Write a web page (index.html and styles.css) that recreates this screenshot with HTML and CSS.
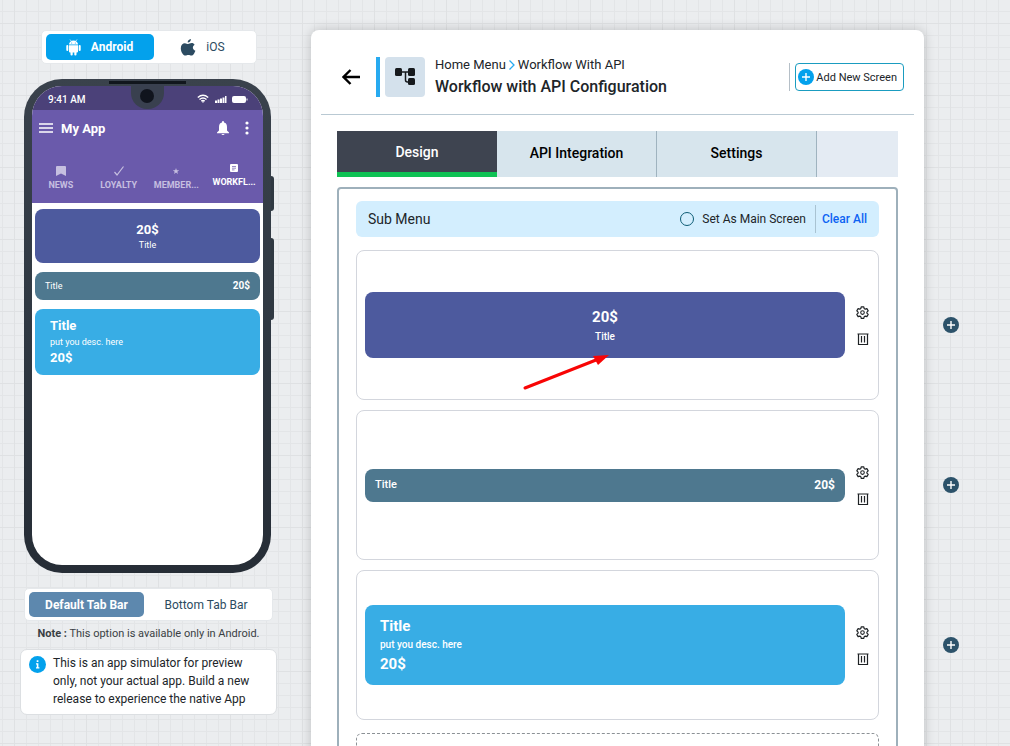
FILE: index.html
```html
<!DOCTYPE html>
<html lang="en">
<head>
    <meta charset="UTF-8">
    <meta name="viewport" content="width=device-width, initial-scale=1.0">
    <title>Workflow with API Configuration</title>
    <link rel="stylesheet" href="styles.css">
</head>
<body>

    <!-- shared icons -->
    <svg class="sprite" aria-hidden="true">
        <symbol id="icon-gear" viewBox="0 0 24 24">
            <path fill="none" stroke="currentColor" stroke-width="2.2" stroke-linejoin="round" d="M9.600 1.500h4.800l.7 3.200 1.900 1.100 3.100-1 2.400 4.200-2.400 2.200v2l2.400 2.200-2.400 4.200-3.100-1-1.900 1.100-.7 3.100H9.600l-.7-3.100L7 18.600l-3.100 1-2.400-4.200 2.400-2.200v-2L1.500 9l2.400-4.200 3.100 1 1.900-1.100z"/>
            <circle cx="12" cy="12.200" r="3.300" fill="none" stroke="currentColor" stroke-width="2"/>
        </symbol>
        <symbol id="icon-trash" viewBox="0 0 12 12">
            <path fill="none" stroke="currentColor" stroke-width="1.200" d="M0.500 1h11M1.500 1.500v10h9v-10M4.500 3v6.500M7.500 3v6.500"/>
        </symbol>
        <symbol id="icon-plus" viewBox="0 0 16 16">
            <circle cx="8" cy="8" r="8" fill="currentColor"/>
            <path stroke="#fff" stroke-width="1.400" d="M8 4v8M4 8h8"/>
        </symbol>
    </svg>

    <aside class="preview">
        <div class="switch platform-switch">
            <button type="button" class="switch-btn active">
                <svg width="15" height="17" viewBox="0 0 15 17" fill="currentColor"><path d="M3 5.500a4.500 4 0 0 1 9 0zM3 6.200h9v6.300a1 1 0 0 1-1 1H4a1 1 0 0 1-1-1z"/><rect x="0.300" y="6" width="2" height="6" rx="1"/><rect x="12.700" y="6" width="2" height="6" rx="1"/><rect x="4.500" y="12" width="2.200" height="4.500" rx="1"/><rect x="8.300" y="12" width="2.200" height="4.500" rx="1"/><path d="M4 0.500l1.500 2M11 0.500l-1.500 2" stroke="currentColor" stroke-width="0.700"/><circle cx="5.700" cy="4" r="0.500" fill="#03a1ec"/><circle cx="9.300" cy="4" r="0.500" fill="#03a1ec"/></svg>
                Android
            </button>
            <button type="button" class="switch-btn">
                <svg width="16" height="17" viewBox="0 0 16 17" fill="currentColor"><path d="M10.900 0c.2 1.900-1.300 3.600-3.200 3.600C7.500 1.800 9 .2 10.900 0zM14.600 5.700c-2.600 1.600-2.100 4.900.8 6-.7 2-2.200 4.900-4 4.900-1.200 0-1.600-.7-3-.7s-1.900.7-3 .7C3.200 16.600.800 12.700.800 9.200c0-3.200 2-5 4.100-5 1.300 0 2.400.8 3.200.8.800 0 2-.9 3.700-.9 1.100 0 2.200.6 2.800 1.600z"/></svg>
                iOS
            </button>
        </div>

        <div class="phone">
            <span class="phone-key key-power"></span>
            <span class="phone-key key-volume"></span>
            <span class="speaker"></span>
            <span class="notch"><span class="camera"></span></span>
            <div class="screen">
                <div class="status-bar">
                    <span>9:41 AM</span>
                    <svg width="52" height="10" viewBox="0 0 52 10" fill="none" stroke="#fff"><path stroke-width="1.500" d="M0.800 3.500q5.200-4.400 10.400 0M2.500 5.500q3.500-2.800 7 0M4.300 7.200q1.700-1.300 3.400 0"/><path fill="#fff" stroke="none" d="M4.800 7.500h2.400L6 9zM18 6.500h2V9h-2zM20.500 5.500h2V9h-2zM23 4.500h2V9h-2zM25.500 3.500h2V9h-2zM28 2h1.500v7H28z"/><rect x="35" y="2" width="14" height="7" rx="2" fill="#fff" stroke="none"/><path d="M50 4.500v2"/></svg>
                </div>
                <div class="app-header">
                    <div class="app-title">
                        <svg width="14" height="10" viewBox="0 0 14 10"><path stroke="#fff" stroke-width="1.500" d="M0 1h14M0 5h14M0 9h14"/></svg>
                        <strong>My App</strong>
                        <svg width="12" height="14" viewBox="0 0 12 14" fill="#fff"><path d="M6 0a1 1 0 0 1 1 1v.500c2.200.5 3 2.300 3 4.500v3.500l2 2v.8H0v-.8l2-2V6c0-2.200.8-4 3-4.500V1a1 1 0 0 1 1-1zM4.500 13h3a1.500 1 0 0 1-3 0z"/></svg>
                        <svg width="4" height="14" viewBox="0 0 4 14" fill="#fff"><circle cx="2" cy="2" r="1.600"/><circle cx="2" cy="7" r="1.600"/><circle cx="2" cy="12" r="1.600"/></svg>
                    </div>
                    <nav class="app-tabs">
                        <a href="#" class="app-tab">
                            <svg width="10" height="10" viewBox="0 0 10 10" fill="currentColor"><path d="M0 1q0-1 1-1h8q1 0 1 1v9L5 7.500 0 10z"/></svg>
                            NEWS
                        </a>
                        <a href="#" class="app-tab">
                            <svg width="10" height="10" viewBox="0 0 10 10" fill="none" stroke="currentColor"><path stroke-width="1.200" d="M0.500 6L3 9l6.500-8.500"/></svg>
                            LOYALTY
                        </a>
                        <a href="#" class="app-tab">
                            <svg width="10" height="10" viewBox="0 0 10 10" fill="currentColor"><path d="M5 2l.8 2.200h2.400L6.300 5.700 7 8 5 6.600 3 8l.7-2.300L1.800 4.200h2.400z"/></svg>
                            MEMBER...
                        </a>
                        <a href="#" class="app-tab active">
                            <svg width="10" height="10" viewBox="0 0 10 10"><rect x="1" y="1" width="8" height="8" rx="1" fill="currentColor"/><path stroke="#6a5aab" stroke-width="0.700" d="M3 3.500h4M3 5.200h4M3 6.900h2.500"/></svg>
                            WORKFL...
                        </a>
                    </nav>
                </div>
                <div class="app-body">
                    <div class="tile tile-center"><strong>20$</strong><span>Title</span></div>
                    <div class="tile tile-row"><span>Title</span><strong>20$</strong></div>
                    <div class="tile tile-desc"><strong>Title</strong><span>put you desc. here</span><strong>20$</strong></div>
                </div>
            </div>
        </div>

        <div class="switch tabbar-switch">
            <button type="button" class="switch-btn active">Default Tab Bar</button>
            <button type="button" class="switch-btn">Bottom Tab Bar</button>
        </div>
        <p class="note"><strong>Note :</strong> This option is available only in Android.</p>
        <div class="info">
            <svg width="17" height="17" viewBox="0 0 17 17"><circle cx="8.500" cy="8.500" r="8.500" fill="#03a1ec"/><path fill="#fff" d="M7.700 4.300h1.700V6H7.700zM7 7.300h2.400v4h1v1.200H7v-1.200h.8V8.500H7z"/></svg>
            <p>This is an app simulator for preview only, not your actual app. Build a new release to experience the native App</p>
        </div>
    </aside>

    <main class="panel">
        <header class="panel-header">
            <button type="button" class="back" aria-label="Back">
                <svg width="18" height="16" viewBox="0 0 18 16" fill="none" stroke="#000" stroke-width="2.400"><path d="M18 8H1.500M8.500 1l-7 7 7 7"/></svg>
            </button>
            <span class="accent"></span>
            <div class="page-icon">
                <svg width="20" height="18" viewBox="0 0 20 18"><path fill="none" stroke="#16191d" stroke-width="1.500" d="M5 4h10M10.500 4v8q0 2 2 2H15"/><g fill="#16191d"><rect width="7" height="8" rx="1.500"/><rect x="13" width="7" height="8" rx="1.500"/><rect x="13" y="10" width="7" height="7" rx="1.500"/></g></svg>
            </div>
            <div class="page-title">
                <div class="breadcrumb">
                    <a href="#">Home Menu</a>
                    <svg width="6" height="10" viewBox="0 0 6 10" fill="none" stroke="#27aaf0" stroke-width="1.300"><path d="M0.500 0.500L5 5 0.500 9.500"/></svg>
                    <a href="#">Workflow With API</a>
                </div>
                <h1>Workflow with API Configuration</h1>
            </div>
            <div class="header-action">
                <button type="button" class="add-screen">
                    <svg width="16" height="16"><use href="#icon-plus"/></svg>
                    Add New Screen
                </button>
            </div>
        </header>

        <nav class="tabs">
            <button type="button" class="tab active">Design</button>
            <button type="button" class="tab">API Integration</button>
            <button type="button" class="tab">Settings</button>
        </nav>

        <section class="designer">
            <div class="submenu">
                <h2>Sub Menu</h2>
                <label class="main-screen"><input type="radio" name="mainScreen"> Set As Main Screen</label>
                <a href="#" class="clear">Clear All</a>
            </div>

            <div class="card">
                <div class="tile tile-center"><strong>20$</strong><span>Title</span></div>
                <div class="card-tools">
                    <button type="button" aria-label="Settings"><svg width="13" height="13"><use href="#icon-gear"/></svg></button>
                    <button type="button" aria-label="Delete"><svg width="12" height="12"><use href="#icon-trash"/></svg></button>
                </div>
                <svg class="pointer" width="88" height="38" viewBox="0 0 88 38"><path d="M3 34L74 6" stroke="#f80505" stroke-width="3" stroke-linecap="round"/><path fill="#f80505" d="M87 1L71 2l5 9z"/></svg>
            </div>
            <div class="card">
                <div class="tile tile-row"><span>Title</span><strong>20$</strong></div>
                <div class="card-tools">
                    <button type="button" aria-label="Settings"><svg width="13" height="13"><use href="#icon-gear"/></svg></button>
                    <button type="button" aria-label="Delete"><svg width="12" height="12"><use href="#icon-trash"/></svg></button>
                </div>
            </div>
            <div class="card">
                <div class="tile tile-desc"><strong>Title</strong><span>put you desc. here</span><strong>20$</strong></div>
                <div class="card-tools">
                    <button type="button" aria-label="Settings"><svg width="13" height="13"><use href="#icon-gear"/></svg></button>
                    <button type="button" aria-label="Delete"><svg width="12" height="12"><use href="#icon-trash"/></svg></button>
                </div>
            </div>
            <div class="drop-zone"></div>
        </section>
    </main>

    <div class="row-adders">
        <button type="button" aria-label="Add row"><svg width="16" height="16"><use href="#icon-plus"/></svg></button>
        <button type="button" aria-label="Add row"><svg width="16" height="16"><use href="#icon-plus"/></svg></button>
        <button type="button" aria-label="Add row"><svg width="16" height="16"><use href="#icon-plus"/></svg></button>
    </div>

</body>
</html>
```
FILE: styles.css
```css
* {
    box-sizing: border-box;
}

body {
    margin: 0;
    height: 100vh;
    overflow: hidden;
    display: flex;
    align-items: flex-start;
    font-family: Roboto, "Liberation Sans", sans-serif;
    color: #212529;
    background-color: #ebedef;
    background-image:
        linear-gradient(#dfe1e3 1px, transparent 1px),
        linear-gradient(90deg, #dfe1e3 1px, transparent 1px),
        linear-gradient(#e3e5e7 1px, transparent 1px),
        linear-gradient(90deg, #e3e5e7 1px, transparent 1px);
    background-size: 72px 72px, 72px 72px, 12px 12px, 12px 12px;
    background-position: 2px 23px, 14px 0, 2px 11px, 2px 11px;
}

button {
    font: inherit;
    color: inherit;
    border: 0;
    padding: 0;
    background: none;
    cursor: pointer;
}

a {
    color: inherit;
    text-decoration: none;
}

svg {
    display: block;
    flex: none;
}

h1, h2, p {
    margin: 0;
    font-weight: 400;
}

.sprite {
    position: absolute;
    width: 0;
    height: 0;
}

/* left column */
.preview {
    flex: none;
    width: 297px;
    padding-top: 30px;
    display: flex;
    flex-direction: column;
    align-items: center;
}

.switch {
    display: flex;
    padding: 3px 4px;
    background: #fff;
    border: 1px solid #e5e8eb;
    border-radius: 5px;
    color: #2c4b61;
    font-size: 12px;
}

.switch-btn {
    flex: 1;
    height: 26px;
    display: flex;
    align-items: center;
    justify-content: center;
    gap: 10px;
    border-radius: 5px;
}

.switch-btn.active {
    flex: none;
    color: #fff;
    font-weight: 700;
}

.platform-switch {
    width: 216px;
}

.platform-switch .active {
    width: 108px;
    background: #03a1ec;
}

.tabbar-switch {
    width: 249px;
    margin-top: 15px;
}

.tabbar-switch .active {
    width: 115px;
    background: #5d88ae;
}

.tabbar-switch .switch-btn {
    height: 25px;
}

.phone {
    position: relative;
    width: 247px;
    margin-top: 15px;
    margin-right: 2px;
    padding: 7px 8px 8px;
    border-radius: 38px;
    background: linear-gradient(#3a424c, #2f3842 50%, #262d36);
}

.phone-key {
    position: absolute;
    right: -3px;
    width: 3px;
    border-radius: 0 3px 3px 0;
    background: #303942;
}

.key-power {
    top: 97px;
    height: 35px;
}

.key-volume {
    top: 159px;
    height: 82px;
}

.speaker {
    position: absolute;
    top: 2px;
    left: 85px;
    width: 77px;
    height: 3px;
    background: #11161d;
}

.notch {
    position: absolute;
    top: 5px;
    left: 107px;
    width: 33px;
    height: 25px;
    padding: 5px 9px;
    border-radius: 0 0 16px 16px;
    background: #39404f;
}

.camera {
    display: block;
    width: 14px;
    height: 14px;
    border-radius: 50%;
    background: #10141d;
}

.screen {
    height: 479px;
    border-radius: 30px;
    overflow: hidden;
    background: #fff;
}

.status-bar {
    display: flex;
    align-items: center;
    justify-content: space-between;
    height: 24px;
    padding: 2px 14px 0 16px;
    background: #4b4179;
    color: #fff;
    font-size: 10px;
    font-weight: 500;
}

.app-header {
    height: 93px;
    background: #6a5aab;
    color: #fff;
}

.app-title {
    display: flex;
    align-items: center;
    gap: 16px;
    height: 36px;
    padding: 0 14px 0 7px;
    font-size: 13px;
}

.app-title strong {
    flex: 1;
    margin-left: -8px;
}

.app-tabs {
    display: grid;
    grid-template-columns: repeat(4, 1fr);
    padding-top: 20px;
}

.app-tab {
    display: flex;
    flex-direction: column;
    align-items: center;
    gap: 4px;
    font-size: 9px;
    line-height: 11px;
    font-weight: 700;
    color: #c6bfe0;
}

.app-tab.active {
    margin-top: -3px;
    color: #fff;
}

.app-body {
    display: flex;
    flex-direction: column;
    gap: 9px;
    padding: 6px 3px;
}

/* menu tiles, used in the phone and in the designer */
.tile {
    display: flex;
    color: #fff;
    border-radius: 8px;
    font-weight: 500;
}

.tile-center {
    flex-direction: column;
    align-items: center;
    background: #4d5a9e;
}

.tile-row {
    align-items: center;
    justify-content: space-between;
    background: #4e788f;
}

.tile-desc {
    flex-direction: column;
    background: #38ade5;
}

.app-body .tile {
    font-size: 9px;
    line-height: 14px;
    font-weight: 400;
}

.app-body .tile strong {
    font-size: 13px;
    line-height: 16px;
}

.app-body .tile-center {
    padding: 13px 10px 11px;
}

.app-body .tile-row {
    padding: 6px 10px;
}

.app-body .tile-row strong {
    font-size: 10px;
}

.app-body .tile-desc {
    gap: 1px;
    padding: 9px 15px;
}

.note {
    margin-top: 6px;
    font-size: 11px;
    line-height: 14px;
    color: #3a3f44;
}

.info {
    display: flex;
    gap: 7px;
    width: 257px;
    margin-top: 8px;
    padding: 4px 12px 6px 8px;
    background: #fff;
    border: 1px solid #dcdfe2;
    border-radius: 7px;
    font-size: 12px;
    line-height: 18px;
}

.info svg {
    margin-top: 2px;
}

/* main panel */
.panel {
    flex: 1;
    min-width: 0;
    margin: 30px 0 0 14px;
    padding: 0 10px;
    background: #fff;
    border-radius: 8px;
    box-shadow: 0 0 12px rgba(0, 0, 0, 0.2);
}

.panel-header {
    display: flex;
    align-items: center;
    height: 85px;
    padding: 10px 10px 0 21px;
    border-bottom: 1px solid #b9c9d3;
}

.accent {
    width: 4px;
    height: 40px;
    margin-left: 16px;
    background: #27aaf0;
}

.page-icon {
    display: flex;
    align-items: center;
    justify-content: center;
    width: 40px;
    height: 40px;
    margin-left: 5px;
    background: #d4e1ec;
    border-radius: 4px;
}

.page-title {
    flex: 1;
    margin-left: 10px;
    padding-top: 1px;
}

.breadcrumb {
    display: flex;
    align-items: center;
    gap: 3px;
    font-size: 13px;
    line-height: 18px;
}

.page-title h1 {
    font-size: 16px;
    font-weight: 500;
    line-height: 26px;
}

.header-action {
    padding-left: 5px;
    border-left: 1px solid #b5bfc7;
}

.add-screen {
    display: flex;
    align-items: center;
    gap: 2px;
    height: 28px;
    padding: 0 6px 0 2px;
    border: 1px solid #1a9cc0;
    border-radius: 4px;
    font-size: 11px;
}

.add-screen svg {
    color: #03a1ec;
}

.tabs {
    display: flex;
    height: 46px;
    margin: 16px 16px 0;
    background: #e4ebf3;
}

.tab {
    width: 160px;
    padding-bottom: 2px;
    background: #d7e5ed;
    border-right: 1px solid #9fb3bf;
    color: #000;
    font-size: 14px;
    font-weight: 500;
}

.tab.active {
    padding-top: 3px;
    background: #3e4450;
    border-right: 0;
    border-bottom: 5px solid #0ec254;
    color: #fff;
}

.designer {
    margin: 10px 16px 0;
    padding: 12px 17px;
    border: 2px solid #9eb0bb;
    border-radius: 4px;
}

.submenu {
    display: flex;
    align-items: center;
    height: 36px;
    margin-bottom: 13px;
    padding: 0 12px;
    background: #d3eefe;
    border-radius: 6px;
    font-size: 12px;
}

.submenu h2 {
    flex: 1;
    font-size: 14px;
}

.main-screen {
    display: flex;
    align-items: center;
    gap: 8px;
    height: 28px;
    padding-right: 9px;
    border-right: 1px solid #a9c3d2;
}

.main-screen input {
    appearance: none;
    width: 14px;
    height: 14px;
    margin: 0;
    border: 1px solid #0d5c75;
    border-radius: 50%;
}

.main-screen input:checked {
    box-shadow: inset 0 0 0 3px #d3eefe;
    background: #0d5c75;
}

.clear {
    margin-left: 6px;
    color: #0d63f3;
    font-weight: 500;
}

.card {
    position: relative;
    display: flex;
    align-items: center;
    height: 150px;
    margin-bottom: 10px;
    padding: 0 9px 0 8px;
    border: 1px solid #d3d6dd;
    border-radius: 8px;
}

.card .tile {
    flex: 1;
    font-size: 10px;
    line-height: 18px;
}

.card .tile strong {
    font-size: 15px;
    line-height: 20px;
}

.card .tile-center {
    gap: 1px;
    padding: 15px 10px 12px;
}

.card .tile-row {
    padding: 6px 10px 7px;
    font-size: 11px;
}

.card .tile-row strong {
    font-size: 12px;
}

.card .tile-desc {
    padding: 11px 15px;
}

.card-tools {
    display: flex;
    flex-direction: column;
    align-items: center;
    gap: 14px;
    width: 13px;
    margin-left: 11px;
}

.card-tools button {
    color: #1e2225;
}

.pointer {
    position: absolute;
    left: 165px;
    top: 103px;
}

.drop-zone {
    height: 150px;
    margin-top: 13px;
    border: 1px dashed #8c9196;
    border-radius: 6px;
}

.row-adders {
    flex: none;
    display: flex;
    flex-direction: column;
    align-items: center;
    gap: 144px;
    width: 86px;
    padding: 317px 32px 0 0;
    color: #2c526a;
}
```
